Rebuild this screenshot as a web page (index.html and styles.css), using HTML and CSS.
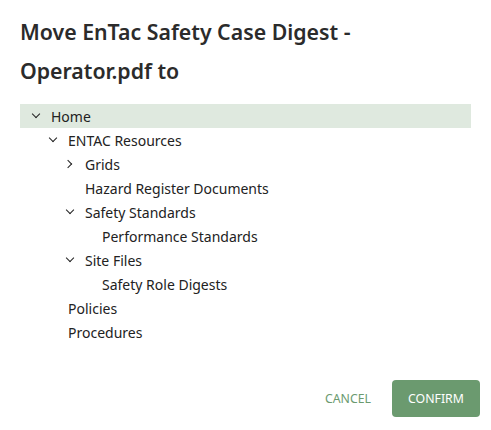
FILE: index.html
```html
<!DOCTYPE html>
<html>
<head>
<meta charset="utf-8">
<link rel="stylesheet" href="styles.css">
</head>
<body>
<div class="dialog">
  <h1 class="title">Move EnTac Safety Case Digest - Operator.pdf to</h1>
  <ul class="tree">
    <li class="row selected lvl0"><span class="chev down"></span><span class="label">Home</span></li>
    <li class="row lvl1"><span class="chev down"></span><span class="label">ENTAC Resources</span></li>
    <li class="row lvl2"><span class="chev right"></span><span class="label">Grids</span></li>
    <li class="row lvl2"><span class="chev none"></span><span class="label">Hazard Register Documents</span></li>
    <li class="row lvl2"><span class="chev down"></span><span class="label">Safety Standards</span></li>
    <li class="row lvl3"><span class="chev none"></span><span class="label">Performance Standards</span></li>
    <li class="row lvl2"><span class="chev down"></span><span class="label">Site Files</span></li>
    <li class="row lvl3"><span class="chev none"></span><span class="label">Safety Role Digests</span></li>
    <li class="row lvl1"><span class="chev none"></span><span class="label">Policies</span></li>
    <li class="row lvl1"><span class="chev none"></span><span class="label">Procedures</span></li>
  </ul>
  <div class="actions">
    <button class="btn text">CANCEL</button>
    <button class="btn primary">CONFIRM</button>
  </div>
</div>
</body>
</html>
```
FILE: styles.css
```css
html, body { margin: 0; padding: 0; background: #fff; }
body { font-family: "Noto Sans", "Open Sans", sans-serif; color: #222; }
.dialog { width: 491px; height: 430px; box-sizing: border-box; padding: 12px 20px 0 20px; }
.title { margin: 0; font-size: 21.3px; font-weight: 600; line-height: 39px; color: #2b2b2b; width: 400px; }
.tree { list-style: none; margin: 14px 0 0 0; padding: 0; width: 451px; }
.row { display: flex; align-items: center; height: 24px; font-size: 14px; color: #222; }
.row.selected { background: #dfe9df; }
.lvl0 { padding-left: 11px; }
.lvl1 { padding-left: 28px; }
.lvl2 { padding-left: 45px; }
.lvl3 { padding-left: 62px; }
.chev { width: 20px; height: 24px; display: inline-flex; align-items: center; justify-content: flex-start; }
.chev::before { content: ""; display: block; width: 5px; height: 5px; border-right: 1.6px solid #222; border-bottom: 1.6px solid #222; margin-left: 2px; }
.chev.down::before { transform: rotate(45deg); margin-top: -4px; }
.chev.right::before { transform: rotate(-45deg); margin-left: 0px; }
.chev.none::before { display: none; }
.label { white-space: nowrap; }
.actions { display: flex; justify-content: flex-end; align-items: center; gap: 21px; margin-top: 36px; margin-right: -9px; }
.btn { font-family: inherit; font-size: 12.3px; border: none; cursor: pointer; letter-spacing: 0; }
.btn.text { background: none; color: #6b9a6f; padding: 0; }
.btn.primary { background: #6b9a6f; color: #fff; height: 37px; width: 88px; border-radius: 4px; }
```
